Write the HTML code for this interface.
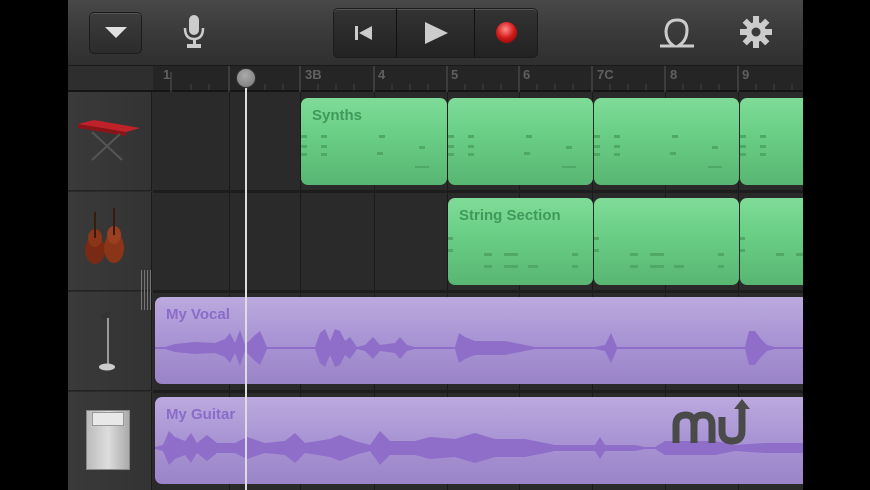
<!DOCTYPE html>
<html><head><meta charset="utf-8"><style>
*{margin:0;padding:0;box-sizing:border-box}
body{width:870px;height:490px;background:#000;position:relative;overflow:hidden;font-family:"Liberation Sans",sans-serif}
.abs{position:absolute}
#app{left:68px;top:0;width:735px;height:490px;background:#2b2b2b;overflow:hidden}
#tb{left:0;top:0;width:735px;height:66px;background:linear-gradient(#484848,#3a3a3a 50%,#2f2f2f);border-bottom:1px solid #1a1a1a}
.btn{border:1px solid #1c1c1c;border-radius:5px;background:linear-gradient(#3c3c3c,#2c2c2c);box-shadow:inset 0 1px 0 #555}
#ruler{left:85px;top:66px;width:650px;height:26px;background:#252525;border-bottom:2px solid #151515}
.hdr{left:0;width:84px;height:99px;background:linear-gradient(90deg,#3a3a3a,#333);border-bottom:1px solid #222;border-right:1px solid #1a1a1a}
.grn{background:linear-gradient(#7fdc98,#6bcf86 40%,#58b672);border-radius:7px;height:87px}
.pur{background:linear-gradient(#bba9de,#a994d4 50%,#9a84c8);border-radius:7px;height:87px}
.lbl{font-weight:bold;font-size:15px;position:absolute;left:11px;top:9px}
.grn .lbl{color:#3f9a5a}
.pur .lbl{color:#8a6cc8}
.vl{position:absolute;top:92px;width:1px;height:398px;background:#1a1a1a}
.rn{position:absolute;top:1px;color:#606060;font-size:13px;font-weight:bold}
</style></head><body>
<div id="app" class="abs">
<div id="tb" class="abs">
 <div class="abs btn" style="left:21px;top:12px;width:53px;height:42px"></div>
 <svg class="abs" style="left:37px;top:27px" width="22" height="12"><polygon points="0,0 22,0 11,11" fill="#e0e0e0"/></svg>
 <svg class="abs" style="left:114px;top:15px" width="24" height="34"><rect x="7" y="0" width="10" height="20" rx="5" fill="#ccc"/><path d="M3 13 Q3 24 12 24 Q21 24 21 13" stroke="#ccc" stroke-width="2.5" fill="none"/><rect x="11" y="24" width="3" height="5" fill="#ccc"/><rect x="5" y="29" width="14" height="4" fill="#ccc"/></svg>
 <div class="abs btn" style="left:265px;top:8px;width:205px;height:50px;background:linear-gradient(#333,#222)"></div>
 <div class="abs" style="left:328px;top:9px;width:1px;height:48px;background:#111"></div>
 <div class="abs" style="left:406px;top:9px;width:1px;height:48px;background:#111"></div>
 <svg class="abs" style="left:287px;top:25px" width="20" height="16"><rect x="0" y="1" width="3" height="14" fill="#ccc"/><polygon points="4,8 17,1 17,15" fill="#ccc"/></svg>
 <svg class="abs" style="left:357px;top:22px" width="24" height="22"><polygon points="0,0 23,11 0,22" fill="#ccc"/></svg>
 <div class="abs" style="left:428px;top:22px;width:21px;height:21px;border-radius:50%;background:radial-gradient(circle at 45% 35%,#ff8a8a,#d01818 50%,#7a0000)"></div>
 <svg class="abs" style="left:590px;top:16px" width="38" height="34"><path d="M2 30 H16 Q8 25 8 15 Q9 4 19 4 Q29 4 29 14 Q29 25 20 30 H36" stroke="#ccc" stroke-width="3" fill="none"/></svg>
 <svg class="abs" style="left:671px;top:16px" width="34" height="32" viewBox="-16 -16 32 32"><g fill="#ccc"><circle r="10"/><g id="t"><rect x="-3" y="-16" width="6" height="8"/></g><use href="#t" transform="rotate(45)"/><use href="#t" transform="rotate(90)"/><use href="#t" transform="rotate(135)"/><use href="#t" transform="rotate(180)"/><use href="#t" transform="rotate(225)"/><use href="#t" transform="rotate(270)"/><use href="#t" transform="rotate(315)"/></g><circle r="4.5" fill="#3a3a3a"/></svg>
</div>
<div class="abs" style="left:0;top:66px;width:85px;height:26px;background:#2e2e2e;border-bottom:2px solid #151515"></div>
<div id="ruler" class="abs">
 <svg class="abs" style="left:0;top:0" width="650" height="26">
 <g stroke="#555" stroke-width="1">
 <line x1="18" y1="6" x2="18" y2="26"/><line x1="76" y1="0" x2="76" y2="26"/><line x1="147" y1="0" x2="147" y2="26"/><line x1="221" y1="0" x2="221" y2="26"/><line x1="294" y1="0" x2="294" y2="26"/><line x1="366" y1="0" x2="366" y2="26"/><line x1="439" y1="0" x2="439" y2="26"/><line x1="512" y1="0" x2="512" y2="26"/><line x1="585" y1="0" x2="585" y2="26"/>
 </g>
 <g stroke="#444" stroke-width="1">
 <path d="M38 18v6M56 18v6M94 18v6M112 18v6M130 18v6M165 18v6M183 18v6M201 18v6M239 18v6M257 18v6M275 18v6M312 18v6M330 18v6M348 18v6M384 18v6M402 18v6M420 18v6M457 18v6M475 18v6M493 18v6M530 18v6M548 18v6M566 18v6M603 18v6M621 18v6M639 18v6"/>
 </g></svg>
 <span class="rn" style="left:10px">1</span><span class="rn" style="left:152px">3B</span><span class="rn" style="left:225px">4</span><span class="rn" style="left:298px">5</span><span class="rn" style="left:370px">6</span><span class="rn" style="left:444px">7C</span><span class="rn" style="left:517px">8</span><span class="rn" style="left:589px">9</span>
</div>
<div class="abs" style="left:85px;top:92px;width:650px;height:398px;background:#2a2a2a"></div>
<div class="vl" style="left:161px"></div><div class="vl" style="left:232px"></div><div class="vl" style="left:306px"></div><div class="vl" style="left:379px"></div><div class="vl" style="left:451px"></div><div class="vl" style="left:524px"></div><div class="vl" style="left:597px"></div><div class="vl" style="left:670px"></div>
<div class="abs" style="left:85px;top:190px;width:650px;height:3px;background:#1d1d1d"></div>
<div class="abs" style="left:85px;top:290px;width:650px;height:3px;background:#1d1d1d"></div>
<div class="abs" style="left:85px;top:390px;width:650px;height:3px;background:#1d1d1d"></div>
<div class="abs hdr" style="top:92px"></div>
<div class="abs hdr" style="top:192px"></div>
<div class="abs hdr" style="top:292px"></div>
<div class="abs hdr" style="top:392px"></div>
<svg class="abs" style="left:8px;top:112px" width="66" height="52"><polygon points="2,12 50,20 64,16 18,8" fill="#c0222a"/><polygon points="2,12 50,20 50,24 2,16" fill="#8a1418"/><path d="M16 20 L46 48 M44 22 L16 48" stroke="#555" stroke-width="2"/></svg>
<svg class="abs" style="left:12px;top:208px" width="50" height="62"><ellipse cx="15" cy="42" rx="10" ry="14" fill="#7a2a14"/><ellipse cx="15" cy="30" rx="7" ry="9" fill="#8a3418"/><ellipse cx="34" cy="40" rx="10" ry="15" fill="#8a3418"/><ellipse cx="34" cy="27" rx="7" ry="9" fill="#9a4020"/><path d="M15 4V30M34 0V27" stroke="#3a1a0a" stroke-width="2"/></svg>
<svg class="abs" style="left:28px;top:310px" width="24" height="64"><path d="M12 8 V56" stroke="#bbb" stroke-width="1.5"/><path d="M6 8 L14 2" stroke="#333" stroke-width="4"/><ellipse cx="11" cy="57" rx="8" ry="3.5" fill="#ccc"/></svg>
<div class="abs" style="left:18px;top:410px;width:44px;height:60px;background:linear-gradient(90deg,#bbb,#ddd,#aaa);border:1px solid #888"></div>
<div class="abs" style="left:24px;top:412px;width:32px;height:14px;background:#e8e8e8;border:1px solid #999"></div>
<div class="abs" style="left:73px;top:270px;width:10px;height:40px;background:repeating-linear-gradient(90deg,#777 0 1px,transparent 1px 3px)"></div>

<div class="abs grn" style="left:233px;top:98px;width:146px"><span class="lbl">Synths</span>
<svg class="abs" style="left:0;top:30px" width="146" height="55" fill="#4fa866"><rect x="0" y="7" width="6" height="3"/><rect x="0" y="17" width="6" height="3"/><rect x="0" y="25" width="6" height="3"/><rect x="20" y="7" width="6" height="3"/><rect x="20" y="17" width="6" height="3"/><rect x="20" y="25" width="6" height="3"/><rect x="78" y="7" width="6" height="3"/><rect x="76" y="24" width="6" height="3"/><rect x="118" y="18" width="6" height="3"/><rect x="114" y="38" width="14" height="2"/></svg></div>
<div class="abs grn" style="left:380px;top:98px;width:145px">
<svg class="abs" style="left:0;top:30px" width="146" height="55" fill="#4fa866"><rect x="0" y="7" width="6" height="3"/><rect x="0" y="17" width="6" height="3"/><rect x="0" y="25" width="6" height="3"/><rect x="20" y="7" width="6" height="3"/><rect x="20" y="17" width="6" height="3"/><rect x="20" y="25" width="6" height="3"/><rect x="78" y="7" width="6" height="3"/><rect x="76" y="24" width="6" height="3"/><rect x="118" y="18" width="6" height="3"/><rect x="114" y="38" width="14" height="2"/></svg></div>
<div class="abs grn" style="left:526px;top:98px;width:145px">
<svg class="abs" style="left:0;top:30px" width="146" height="55" fill="#4fa866"><rect x="0" y="7" width="6" height="3"/><rect x="0" y="17" width="6" height="3"/><rect x="0" y="25" width="6" height="3"/><rect x="20" y="7" width="6" height="3"/><rect x="20" y="17" width="6" height="3"/><rect x="20" y="25" width="6" height="3"/><rect x="78" y="7" width="6" height="3"/><rect x="76" y="24" width="6" height="3"/><rect x="118" y="18" width="6" height="3"/><rect x="114" y="38" width="14" height="2"/></svg></div>
<div class="abs grn" style="left:672px;top:98px;width:80px">
<svg class="abs" style="left:0;top:30px" width="80" height="55" fill="#4fa866"><rect x="0" y="7" width="6" height="3"/><rect x="0" y="17" width="6" height="3"/><rect x="0" y="25" width="6" height="3"/><rect x="20" y="7" width="6" height="3"/><rect x="20" y="17" width="6" height="3"/><rect x="20" y="25" width="6" height="3"/></svg></div>

<div class="abs grn" style="left:380px;top:198px;width:145px"><span class="lbl">String Section</span>
<svg class="abs" style="left:0;top:35px" width="146" height="40" fill="#4fa866"><rect x="0" y="4" width="5" height="3"/><rect x="0" y="16" width="5" height="3"/><rect x="36" y="20" width="8" height="3"/><rect x="56" y="20" width="14" height="3"/><rect x="56" y="32" width="14" height="3"/><rect x="36" y="32" width="8" height="3"/><rect x="80" y="32" width="10" height="3"/><rect x="124" y="20" width="6" height="3"/><rect x="124" y="32" width="6" height="3"/></svg></div>
<div class="abs grn" style="left:526px;top:198px;width:145px">
<svg class="abs" style="left:0;top:35px" width="146" height="40" fill="#4fa866"><rect x="0" y="4" width="5" height="3"/><rect x="0" y="16" width="5" height="3"/><rect x="36" y="20" width="8" height="3"/><rect x="56" y="20" width="14" height="3"/><rect x="56" y="32" width="14" height="3"/><rect x="36" y="32" width="8" height="3"/><rect x="80" y="32" width="10" height="3"/><rect x="124" y="20" width="6" height="3"/><rect x="124" y="32" width="6" height="3"/></svg></div>
<div class="abs grn" style="left:672px;top:198px;width:80px">
<svg class="abs" style="left:0;top:35px" width="80" height="40" fill="#4fa866"><rect x="0" y="4" width="5" height="3"/><rect x="0" y="16" width="5" height="3"/><rect x="36" y="20" width="8" height="3"/><rect x="56" y="20" width="14" height="3"/></svg></div>

<div class="abs pur" style="left:87px;top:297px;width:680px"><span class="lbl">My Vocal</span>
<svg class="abs" style="left:0;top:30px" width="680" height="50"><path fill="#8e6ec8" d="M0 20 L10 20 L20 17 L40 15 L60 16 L70 12 L75 6 L80 16 L85 3 L90 18 L100 8 L105 4 L112 20 L160 20 L165 6 L170 2 L175 14 L180 2 L185 4 L190 14 L195 10 L202 20 L210 18 L218 10 L225 18 L240 16 L245 10 L252 18 L260 20 L300 20 L304 6 L310 10 L320 14 L350 14 L380 20 L440 20 L450 18 L456 6 L462 20 L500 20 L520 20 L590 20 L594 4 L600 4 L606 12 L612 18 L620 20 L680 20 L680 22 L620 22 L612 24 L606 30 L600 38 L594 38 L590 22 L520 22 L462 22 L456 36 L450 24 L440 22 L380 22 L350 28 L320 28 L310 32 L304 36 L300 22 L260 22 L252 24 L245 32 L240 26 L225 24 L218 32 L210 24 L202 22 L195 32 L190 28 L185 38 L180 40 L175 28 L170 40 L165 36 L160 22 L112 22 L105 38 L100 34 L90 24 L85 39 L80 26 L75 36 L70 30 L60 26 L40 27 L20 25 L10 22 L0 22Z"/></svg></div>
<div class="abs pur" style="left:87px;top:397px;width:680px"><span class="lbl">My Guitar</span>
<svg class="abs" style="left:0;top:30px" width="680" height="50"><path fill="#8e6ec8" d="M0 20 L8 18 L14 4 L20 10 L30 14 L36 6 L42 16 L52 8 L62 16 L80 16 L92 10 L110 16 L130 14 L140 6 L150 16 L175 12 L185 8 L200 14 L215 18 L225 4 L235 14 L260 14 L275 10 L300 12 L320 6 L340 12 L370 12 L400 18 L440 18 L445 10 L450 18 L480 18 L490 20 L500 20 L510 14 L560 14 L580 18 L610 16 L640 16 L680 16 L680 26 L640 26 L610 26 L580 24 L560 28 L510 28 L500 22 L490 22 L480 24 L450 24 L445 32 L440 24 L400 24 L370 30 L340 30 L320 36 L300 30 L275 32 L260 28 L235 28 L225 38 L215 24 L200 28 L185 34 L175 30 L150 26 L140 36 L130 28 L110 26 L92 32 L80 26 L62 26 L52 34 L42 26 L36 36 L30 28 L20 32 L14 38 L8 24 L0 22Z"/></svg>
<svg class="abs" style="left:517px;top:0" width="90" height="50"><path d="M4 46 V28 Q4 18 14 18 Q22 18 22 28 V46 M22 28 Q22 18 31 18 Q40 18 40 28 V46 M50 20 V34 Q50 44 60 44 Q70 44 70 34 V12" stroke="#4a4a4a" stroke-width="7" fill="none"/><polygon points="62,12 70,2 78,12" fill="#4a4a4a"/></svg></div>

<div class="abs" style="left:177px;top:78px;width:2px;height:412px;background:#ddd"></div>
<div class="abs" style="left:168px;top:68px;width:20px;height:20px;border-radius:50%;background:radial-gradient(circle at 45% 35%,#aaa,#777);border:1px solid #333"></div>
</div>
</body></html>
